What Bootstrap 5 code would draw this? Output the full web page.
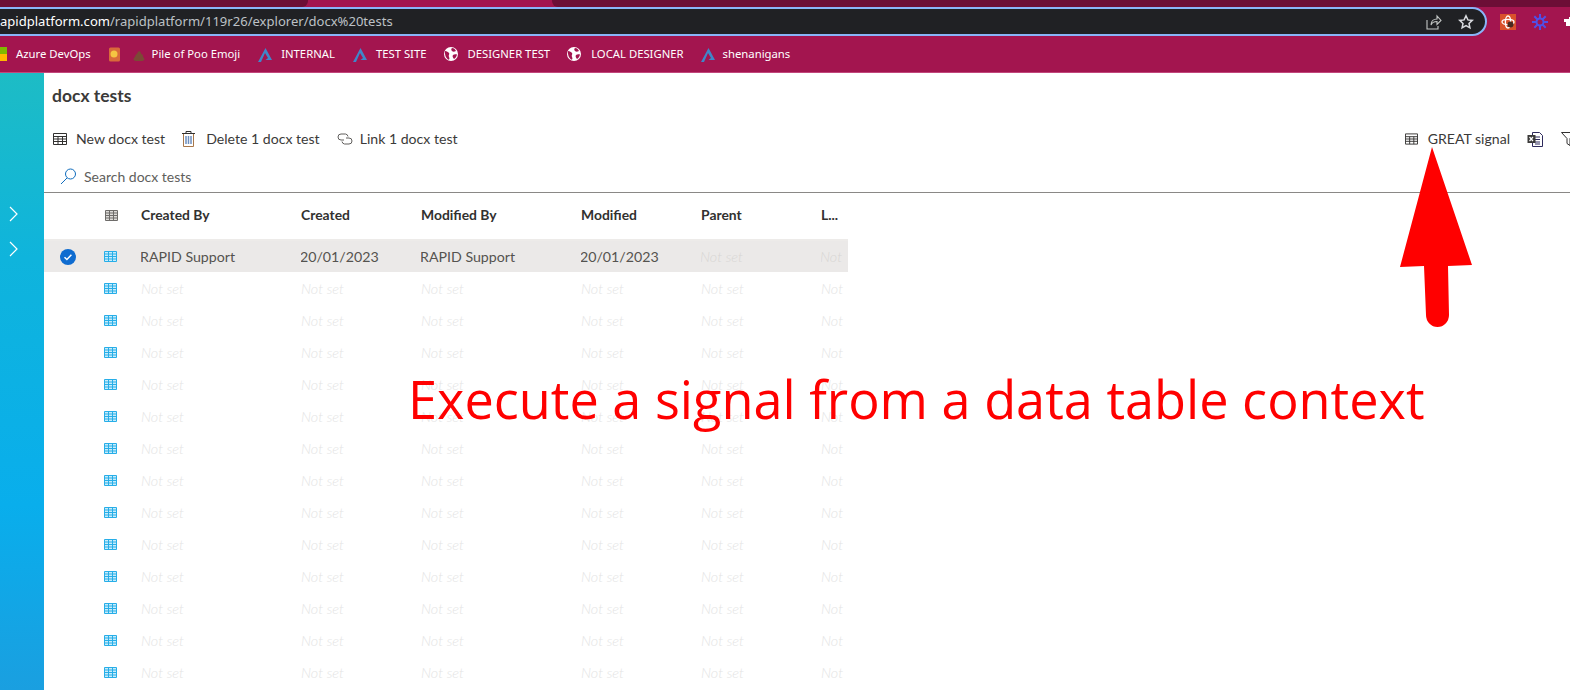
<!DOCTYPE html>
<html lang="en">
<head>
    <meta charset="UTF-8">
    <meta name="viewport" content="width=device-width, initial-scale=1.0">
    <title>docx tests</title>
    <link href="https://cdn.jsdelivr.net/npm/bootstrap@5.3.0/dist/css/bootstrap.min.css" rel="stylesheet">
    <style>
        html, body { height: 690px; overflow: hidden; }
        body { width: 1570px; font-family: "Lato", "Liberation Sans", sans-serif; background: #fff; position: relative; }

        /* browser chrome */
        .chrome { background: #a3154f; height: 73px; border-bottom: 1px solid #c2477c; font-family: "Noto Sans", "Open Sans", sans-serif; }
        .tab-strip { height: 7px; }
        .tab-a { width: 308px; background: #6c0e36; border-bottom-right-radius: 6px; }
        .tab-b { background: #6c0e36; border-bottom-left-radius: 6px; margin-left: 244px; }
        .addr { height: 29px; margin-left: -20px; width: 1507px; flex: none; background: #202124; border: 2px solid #8ab4f8; border-radius: 0 15px 15px 0; padding-left: 18px; font-size: 13.05px; line-height: 25px; color: #fff; white-space: nowrap; }
        .addr-path { color: #bdc1c6; }
        .addr-tools { padding-right: 11px; gap: 16px; }
        .ext-icons { gap: 16px; margin-left: 13px; }
        .bookmarks { height: 36px; font-size: 11.3px; color: #fff; white-space: nowrap; }

        /* app */
        .side-rail { width: 44px; height: 617px; background: linear-gradient(180deg, #1dbcc5 0%, #0fb4dc 30%, #09aeec 70%, #1a9fe0 100%); padding-top: 133px; flex: none; }
        .side-rail svg { display: block; margin: 0 0 19px 7px; }
        .app-main { flex: 1; min-width: 0; }
        .page-title { font-size: 17.5px; font-weight: 700; color: #3b3a39; margin: 0; padding: 12px 0 0 8px; height: 44px; line-height: 22px; }
        .cmd-bar { height: 44px; padding-left: 9px; margin-right: -4px; font-size: 14.1px; color: #3b3a39; white-space: nowrap; }
        .cmd-item { gap: 9px; margin-right: 17px; }
        .cmd-bar-end { margin-left: auto; }
        .search-box { height: 32px; border-bottom: 1px solid #8a8886; padding-left: 16px; font-size: 14px; color: #605e5c; gap: 7px; }

        .grid-tbl { table-layout: fixed; width: 804px; margin: 0; font-size: 14.2px; }
        .grid-tbl th, .grid-tbl td { padding: 0; border: 0; background: transparent; white-space: nowrap; overflow: hidden; vertical-align: middle; }
        .grid-tbl thead th { height: 47px; padding-bottom: 1px; font-size: 13.9px; font-weight: 700; color: #323130; border-bottom: 2px solid #edebe9; }
        .grid-tbl tbody tr { height: 32px; }
        .grid-tbl tbody tr.is-picked td { background: #ebe9e8; color: #55534f; text-indent: -1px; }
        .grid-tbl tbody tr:not(.is-picked) td:nth-child(n+3) { padding-top: 2px; }
        .not-set { color: #e4e4e4; font-style: italic; font-weight: 300; font-size: 14.4px; }
        .grid-tbl tbody tr.is-picked .not-set { color: #d8d6d4; }
        .cell-center { padding-left: 16px !important; }
        .head-icon { display: block; margin-left: 1px; }

        /* annotations pasted over the screenshot */
        .note-text { position: absolute; left: 408px; top: 367px; font-family: "Open Sans", "Noto Sans", sans-serif; font-size: 52.25px; line-height: 64px; color: #f00; white-space: nowrap; }
        .note-arrow { position: absolute; left: 1390px; top: 140px; }
    </style>
</head>
<body>
    <div class="chrome">
        <div class="tab-strip d-flex">
            <div class="tab-a"></div>
            <div class="tab-b flex-grow-1"></div>
        </div>
        <div class="d-flex align-items-center">
            <div class="addr d-flex justify-content-between align-items-center">
                <div>apidplatform.com<span class="addr-path">/rapidplatform/119r26/explorer/docx%20tests</span></div>
                <div class="addr-tools d-flex align-items-center">
                    <svg width="16" height="16" viewBox="0 0 16 16" fill="none" stroke="#c4c7c5" stroke-width="1.1"><path d="M1 6v9h11v-3"/><path d="M5 11c0-4 3-6 6-6V2l4 4.500-4 4V7.500c-3 0-5 1-6 3.500z"/></svg>
                    <svg width="16" height="16" viewBox="0 0 16 16" fill="none" stroke="#dadce0" stroke-width="1.5"><path d="M8 1.800l1.900 4.100 4.400.5-3.300 3 .9 4.400L8 11.600l-3.900 2.200.9-4.400-3.300-3 4.400-.5z"/></svg>
                </div>
            </div>
            <div class="ext-icons d-flex align-items-center">
                <svg width="16" height="16" viewBox="0 0 16 16"><rect width="16" height="16" fill="#d9512c"/><g fill="none" stroke="#fff" stroke-width="1.300"><ellipse cx="8" cy="8" rx="6" ry="2.600"/><ellipse cx="8" cy="8" rx="2.600" ry="6"/></g><circle cx="10.500" cy="10.500" r="3" fill="#4a2a20"/></svg>
                <svg width="16" height="16" viewBox="0 0 16 16" stroke="#5050e6" stroke-width="2"><path d="M8 0v16M0 8h16M2.300 2.300l11.400 11.400M13.700 2.300L2.300 13.700"/><circle cx="8" cy="8" r="3.500" fill="#a3154f"/></svg>
                <svg width="16" height="16" viewBox="0 0 16 16" fill="#fff"><path d="M5 3h3V1h3v2h3v4H6v5H2V8H0V5h5z"/></svg>
            </div>
        </div>
        <div class="bookmarks d-flex align-items-center">
            <svg width="8" height="14" viewBox="0 0 8 14" style="margin-right:8px"><rect width="7" height="7" fill="#7fba00"/><rect y="7" width="7" height="7" fill="#ffb900"/></svg>
            <span style="margin-right:17px">Azure DevOps</span>
            <svg width="13" height="15" viewBox="0 0 13 15" style="margin-right:9px"><rect x="1" y="0.500" width="11" height="14" rx="1.500" fill="#d96a3a"/><circle cx="6" cy="7" r="3.500" fill="#f5c542"/></svg>
            <svg width="12" height="10" viewBox="0 0 12 10" style="margin:3px 7px 0 3px"><path d="M6 0c2 1 2 2 2 3 2 0 2 2 2 3 2 1 2 4-1 4H3C0 10 0 7 2 6c0-1 1-3 2-3 0-1 1-2 2-3z" fill="#7b4a36"/></svg>
            <span style="margin-right:18px">Pile of Poo Emoji</span>
            <svg width="14" height="15" viewBox="0 0 14 15" style="margin-right:9px"><path d="M7.500 1L14 13H7.500L10 11 7 6 3 15H0z" fill="#3f86c9"/></svg>
            <span style="margin-right:18px">INTERNAL</span>
            <svg width="14" height="15" viewBox="0 0 14 15" style="margin-right:9px"><path d="M7.500 1L14 13H7.500L10 11 7 6 3 15H0z" fill="#3f86c9"/></svg>
            <span style="margin-right:18px">TEST SITE</span>
            <svg width="14" height="14" viewBox="0 0 14 14" style="margin-right:9px"><circle cx="7" cy="7" r="7" fill="#fff"/><path d="M1 4c2 0 3 1 4 2s-1 2 0 4 0 3-1 2.500C2 11 .5 8 1 4zM8 1c2 0 3 1 4 3-2 1-3 1-4 0s-1-2 0-3zM9 8c1-1 3-1 4-.5-.5 2-1.500 3.500-3 4.500-1-1-2-3-1-4z" fill="#a3154f"/></svg>
            <span style="margin-right:17px">DESIGNER TEST</span>
            <svg width="14" height="14" viewBox="0 0 14 14" style="margin-right:10px"><circle cx="7" cy="7" r="7" fill="#fff"/><path d="M1 4c2 0 3 1 4 2s-1 2 0 4 0 3-1 2.500C2 11 .5 8 1 4zM8 1c2 0 3 1 4 3-2 1-3 1-4 0s-1-2 0-3zM9 8c1-1 3-1 4-.5-.5 2-1.500 3.500-3 4.500-1-1-2-3-1-4z" fill="#a3154f"/></svg>
            <span style="margin-right:17px">LOCAL DESIGNER</span>
            <svg width="14" height="15" viewBox="0 0 14 15" style="margin-right:8px"><path d="M7.500 1L14 13H7.500L10 11 7 6 3 15H0z" fill="#3f86c9"/></svg>
            <span>shenanigans</span>
        </div>
    </div>

    <div class="d-flex">
        <div class="side-rail">
            <svg width="14" height="16" viewBox="0 0 14 16" fill="none" stroke="#fff" stroke-width="1.200"><path d="M3 1l7 7-7 7"/></svg>
            <svg width="14" height="16" viewBox="0 0 14 16" fill="none" stroke="#fff" stroke-width="1.200"><path d="M3 1l7 7-7 7"/></svg>
        </div>
        <div class="app-main">
            <h1 class="page-title">docx tests</h1>
            <div class="cmd-bar d-flex align-items-center">
                <div class="cmd-item d-flex align-items-center">
                    <svg width="14" height="12" viewBox="0 0 14 12" fill="none" stroke="#323130"><path d="M.5.500h13v11H.5zM.5 3.500h13M.5 6h13M.5 8.500h13M5 3.500v8M9.500 3.500v8"/></svg>
                    <span>New docx test</span>
                </div>
                <div class="cmd-item d-flex align-items-center">
                    <svg width="13" height="16" viewBox="0 0 13 16" fill="none" stroke="#a8774a"><path d="M1.500 3v12.500h10V3"/><path d="M0 2.500h13" stroke="#323130"/><path d="M4 2.500V.500h5v2" stroke="#323130"/><path d="M4 5v8M6.500 5v8M9 5v8" stroke="#6d8fbf" stroke-width="1.500"/></svg>
                    <span style="margin-left:2px">Delete 1 docx test</span>
                </div>
                <div class="cmd-item d-flex align-items-center" style="gap:7px">
                    <svg width="16" height="12" viewBox="0 0 16 12" fill="none" stroke="#605e5c"><path d="M7 7H4a3 3 0 010-6h4.500a3 3 0 012.500 2.500"/><path d="M9 5h3a3 3 0 010 6H7.500A3 3 0 015 8.500"/></svg>
                    <span>Link 1 docx test</span>
                </div>
                <div class="cmd-bar-end d-flex align-items-center">
                    <div class="cmd-item d-flex align-items-center" style="gap:10px;margin-right:17px">
                        <svg width="13" height="12" viewBox="0 0 14 12" fill="none" stroke="#323130"><path d="M.5.500h13v11H.5zM.5 3.500h13M.5 6h13M.5 8.500h13M5 3.500v8M9.500 3.500v8"/></svg>
                        <span>GREAT signal</span>
                    </div>
                    <svg width="17" height="16" viewBox="0 0 17 16" fill="none" style="margin-right:17px"><path d="M5.500 1.500h7l3 3v11h-10z" fill="#fff" stroke="#2e2a5c"/><path d="M8 6h5M8 8.500h5M8 11h5M8 13h5" stroke="#2e2a5c"/><rect x="0.500" y="4" width="8" height="8" fill="#3b3a39"/><path d="M2.500 6l3.500 4M6 6l-3.500 4" stroke="#fff" stroke-width="1.200"/></svg>
                    <svg width="13" height="14" viewBox="0 0 13 14" fill="none" stroke="#323130"><path d="M.5.500h14l-5.500 6v7l-3-2v-5z"/></svg>
                </div>
            </div>
            <div class="search-box d-flex align-items-center">
                <svg width="17" height="17" viewBox="0 0 17 17" fill="none" stroke="#0f6cbd"><circle cx="10.500" cy="6" r="5"/><path d="M7 10L1 16"/></svg>
                <span>Search docx tests</span>
            </div>
            <table class="table grid-tbl" id="grid-tbl">
                <colgroup>
                    <col style="width:60px"><col style="width:37px"><col style="width:160px"><col style="width:120px"><col style="width:160px"><col style="width:120px"><col style="width:120px"><col style="width:27px">
                </colgroup>
                <thead>
                    <tr>
                        <th></th>
                        <th><svg class="head-icon" width="13" height="11" viewBox="0 0 13 11" fill="#dedcd9" stroke="#6e6c6a"><path d="M.5.500h12v10H.5zM.5 3h12M.5 5.500h12M.5 8h12M4.500.500v10M8.500.500v10"/></svg></th>
                        <th>Created By</th>
                        <th>Created</th>
                        <th>Modified By</th>
                        <th>Modified</th>
                        <th>Parent</th>
                        <th>L...</th>
                    </tr>
                </thead>
                <tbody id="grid-body"></tbody>
            </table>
        </div>
    </div>

    <div class="note-text">Execute a signal from a data table context</div>
    <svg class="note-arrow" width="90" height="190" viewBox="0 0 90 190">
        <path d="M42 7L10 127l24-1 2 49a11.500 12 0 0023 0l-1-49 24-1z" fill="#f00"/>
    </svg>

    <script>
        const gridIcon = '<svg width="13" height="11" viewBox="0 0 13 11" style="display:block" fill="#c8ecfb" stroke="#27aee8"><path d="M.5.500h12v10H.5zM.5 3h12M.5 5.500h12M.5 8h12M4.500.500v10M8.500.500v10"/></svg>';
        const checkIcon = '<svg width="16" height="16" viewBox="0 0 16 16" style="display:block"><circle cx="8" cy="8" r="8" fill="#0f6cd0"/><path d="M4.500 8.200l2.400 2.300 4.500-4.700" fill="none" stroke="#fff" stroke-width="1.500"/></svg>';
        const notSet = '<span class="not-set">Not set</span>';
        const notCut = '<span class="not-set">Not</span>';

        // Première ligne sélectionnée, le reste vide
        let html = '<tr class="is-picked"><td class="cell-center">' + checkIcon + '</td><td>' + gridIcon + '</td><td>RAPID Support</td><td>20/01/2023</td><td>RAPID Support</td><td>20/01/2023</td><td>' + notSet + '</td><td>' + notCut + '</td></tr>';
        for (let i = 0; i < 13; i++) {
            html += '<tr><td></td><td>' + gridIcon + '</td>' + ('<td>' + notSet + '</td>').repeat(5) + '<td>' + notCut + '</td></tr>';
        }
        document.querySelector('#grid-body').innerHTML = html;
    </script>
    <script src="https://cdn.jsdelivr.net/npm/bootstrap@5.3.0/dist/js/bootstrap.bundle.min.js"></script>
</body>
</html>
